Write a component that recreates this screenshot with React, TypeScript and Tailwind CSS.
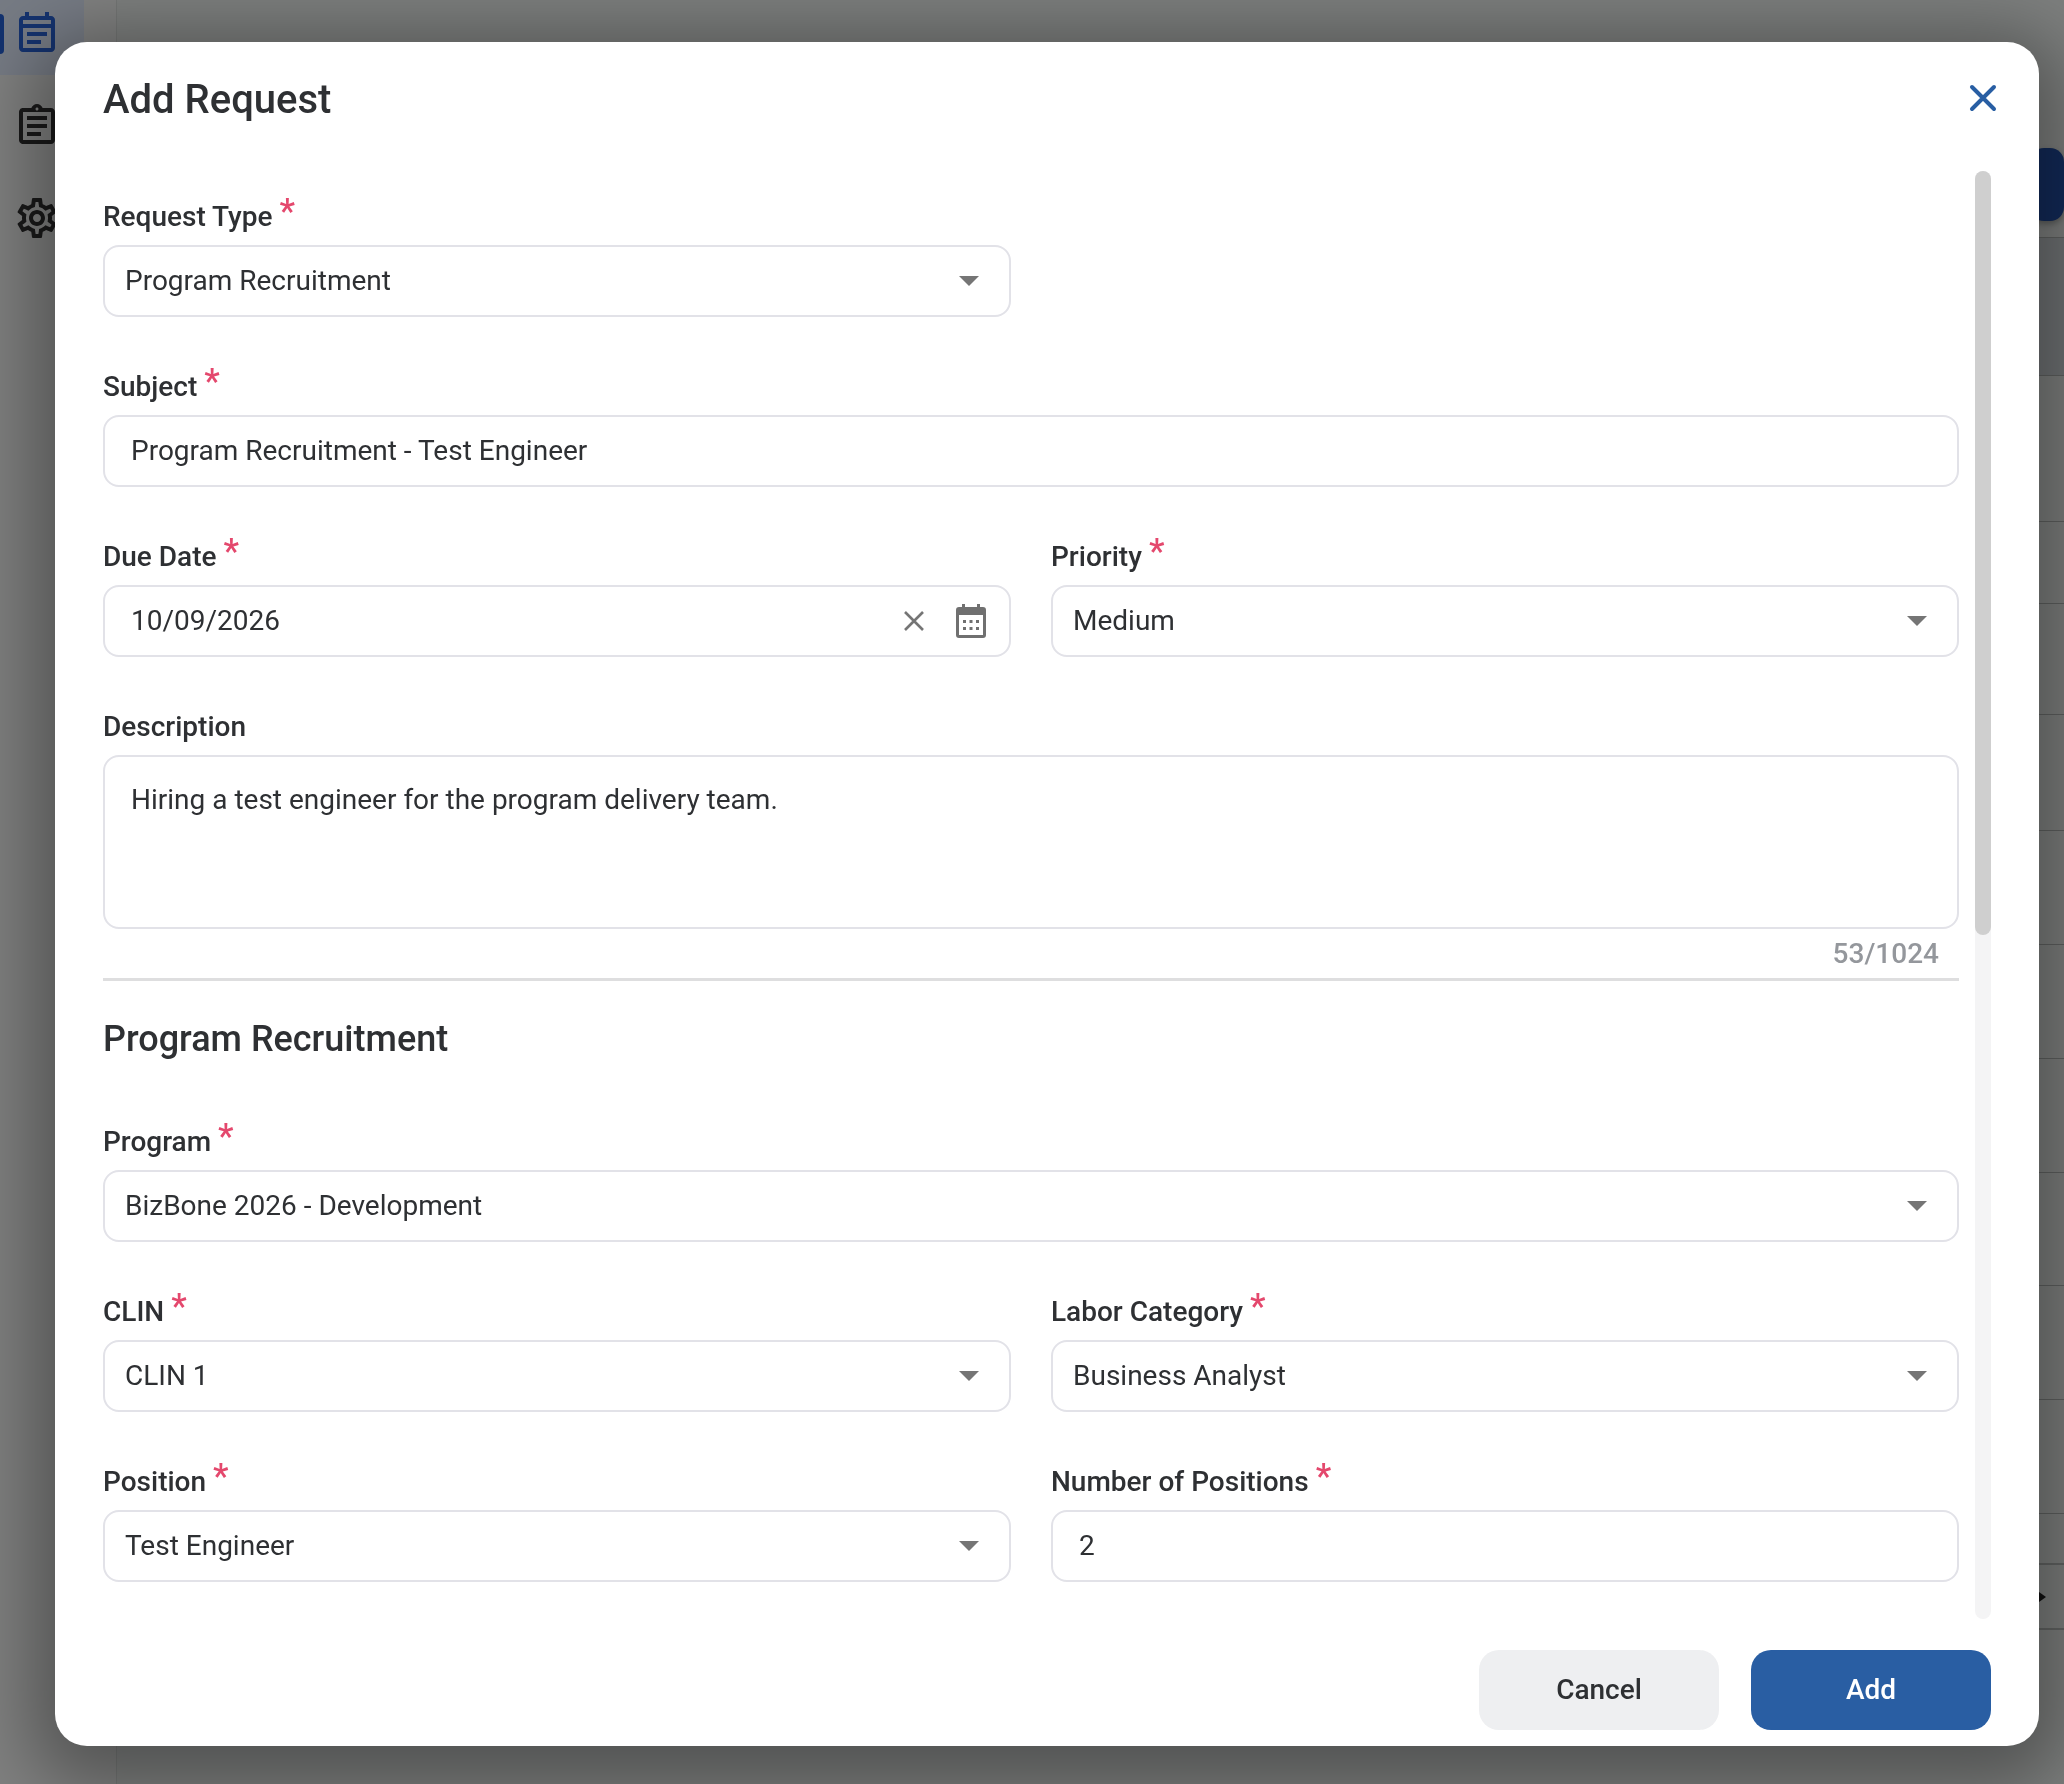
import React from "react";
import { MdOutlineEventNote, MdOutlineAssignment, MdOutlineSettings } from "react-icons/md";

function Label({ text, req = true }: { text: string; req?: boolean }) {
  return (
    <div className="flex h-[52px] items-start text-[28px] leading-[40px] font-medium text-[#2e3033]">
      <span className="mt-[4px]">{text}</span>
      {req && <span className="mt-[3px] ml-[7px] text-[35px] leading-[32px] text-[#e4486d]">*</span>}
    </div>
  );
}

function Caret() {
  return (
    <svg width="20" height="10" viewBox="0 0 20 10" className="shrink-0">
      <path d="M0 0h20L10 10z" fill="#757575" />
    </svg>
  );
}

function Select({ label, value }: { label: string; value: string }) {
  return (
    <div className="min-w-0 flex-1">
      <Label text={label} />
      <div className="flex h-[72px] items-center justify-between rounded-[16px] border-2 border-[#e2e2e8] pr-[30px] pl-[20px] text-[28px] text-[#2e3033]">
        <span>{value}</span>
        <Caret />
      </div>
    </div>
  );
}

function TextBox({ label, value, children }: { label: string; value: string; children?: React.ReactNode }) {
  return (
    <div className="min-w-0 flex-1">
      <Label text={label} />
      <div className="flex h-[72px] items-center justify-between rounded-[16px] border-2 border-[#e2e2e8] pr-[23px] pl-[26px] text-[28px] text-[#2e3033]">
        <span>{value}</span>
        {children}
      </div>
    </div>
  );
}

function Row({ children }: { children: React.ReactNode }) {
  return <div className="flex gap-[40px]">{children}</div>;
}

export default function App() {
  const rowLines = [237, 375, 521, 603, 714, 830, 944, 1058, 1172, 1285, 1399, 1513];
  return (
    <div className="relative h-[1784px] w-[2064px] overflow-hidden bg-[#7d7f7e] font-['Roboto',sans-serif]">
      {/* Dimmed page behind the dialog */}
      <div className="absolute top-0 left-0 h-full w-[117px] border-r border-[#747675] bg-[#808180]">
        <div className="h-[75px] w-[84px] bg-[#767b84]" />
      </div>
      <div className="absolute top-[14px] left-0 h-[40px] w-[4px] rounded-r bg-[#13326f]" />
      <MdOutlineEventNote className="absolute top-[10px] left-[13px] text-[#15336f]" size={48} />
      <MdOutlineAssignment className="absolute top-[102px] left-[13px] text-[#1a1a1a]" size={48} />
      <MdOutlineSettings className="absolute top-[194px] left-[13px] text-[#1a1a1a]" size={48} />
      <div className="absolute top-[237px] left-[2039px] h-[138px] w-[25px] bg-[#6f7274]" />
      <div className="absolute top-[148px] left-[2030px] h-[73px] w-[34px] rounded-[14px] bg-[#122a59] shadow-[0_3px_6px_rgba(0,0,0,0.3)]" />
      {rowLines.map((y) => (
        <div key={y} className="absolute left-[2039px] h-px w-[25px] bg-[#5f6160]" style={{ top: y }} />
      ))}
      <div className="absolute top-[1563px] left-[2020px] h-[67px] w-[60px] rounded-[14px] border-2 border-[#626463]" />
      <div className="absolute top-[1592px] left-[2039px] h-0 w-0 border-y-[5px] border-l-[7px] border-y-transparent border-l-[#111111]" />

      {/* Overlay */}
      <div className="fixed inset-0 flex items-start pt-[42px] pl-[55px]">
        <div className="flex h-[1704px] w-[1984px] flex-col rounded-[32px] bg-white shadow-[0_16px_72px_24px_rgba(0,0,0,0.35)]">
          <div className="flex h-[92px] shrink-0 items-end justify-between pr-[39px] pl-[48px]">
            <h2 className="text-[40px] leading-[68px] font-medium text-[#2e3033]">Add Request</h2>
            <svg width="34" height="34" viewBox="0 0 34 34" className="mb-[19px]">
              <path d="M6 6l22 22M28 6L6 28" stroke="#285ea3" strokeWidth="4" strokeLinecap="round" fill="none" />
            </svg>
          </div>

          <div className="flex min-h-0 flex-1 pr-[48px] pl-[48px]">
            <div className="min-w-0 flex-1">
              <div className="flex flex-col gap-[46px] pt-[59px]">
                <div className="w-[908px]">
                  <Select label="Request Type" value="Program Recruitment" />
                </div>
                <TextBox label="Subject" value="Program Recruitment - Test Engineer" />
                <Row>
                  <TextBox label="Due Date" value="10/09/2026">
                    <div className="flex items-center gap-[30px]">
                      <svg width="24" height="24" viewBox="0 0 24 24">
                        <path d="M3 3l18 18M21 3L3 21" stroke="#757575" strokeWidth="2.6" fill="none" />
                      </svg>
                      <svg width="30" height="34" viewBox="0 0 30 34">
                        <path
                          fillRule="evenodd"
                          fill="#707070"
                          d="M6 0h3v3h12V0h3v3h3a3 3 0 0 1 3 3v25a3 3 0 0 1-3 3H3a3 3 0 0 1-3-3V6a3 3 0 0 1 3-3h3zM3 11v20h24V11z"
                        />
                        <path
                          fill="#707070"
                          d="M7 16h3v3H7zM13.500 16h3v3h-3zM20 16h3v3h-3zM7 23h3v3H7zM13.500 23h3v3h-3zM20 23h3v3h-3z"
                        />
                      </svg>
                    </div>
                  </TextBox>
                  <Select label="Priority" value="Medium" />
                </Row>
                <div>
                  <Label text="Description" req={false} />
                  <div className="h-[174px] rounded-[16px] border-2 border-[#e2e2e8] px-[26px] pt-[24px] text-[28px] leading-[38px] text-[#2e3033]">
                    Hiring a test engineer for the program delivery team.
                  </div>
                  <div className="mt-[9px] pr-[20px] text-right text-[28px] leading-[32px] font-medium text-[#94979c]">53/1024</div>
                  <div className="mt-[8px] h-[3px] bg-[#dededf]" />
                </div>
              </div>

              <h3 className="mt-[34px] text-[36px] leading-[48px] font-medium text-[#2e3033]">Program Recruitment</h3>

              <div className="mt-[55px] flex flex-col gap-[46px]">
                <Select label="Program" value="BizBone 2026 - Development" />
                <Row>
                  <Select label="CLIN" value="CLIN 1" />
                  <Select label="Labor Category" value="Business Analyst" />
                </Row>
                <Row>
                  <Select label="Position" value="Test Engineer" />
                  <TextBox label="Number of Positions" value="2" />
                </Row>
              </div>
            </div>

            <div className="mt-[37px] ml-[16px] h-[1448px] w-[16px] rounded-full bg-[#f4f4f5]">
              <div className="h-[764px] w-full rounded-full bg-[#cfcfcf]" />
            </div>
          </div>

          <div className="flex justify-end gap-[32px] pr-[48px] pb-[16px]">
            <button className="h-[80px] w-[240px] rounded-[20px] bg-[#eeeff1] text-[28px] font-medium text-[#2e3033]">Cancel</button>
            <button className="h-[80px] w-[240px] rounded-[20px] bg-[#295ea3] text-[28px] font-medium text-white">Add</button>
          </div>
        </div>
      </div>
    </div>
  );
}
